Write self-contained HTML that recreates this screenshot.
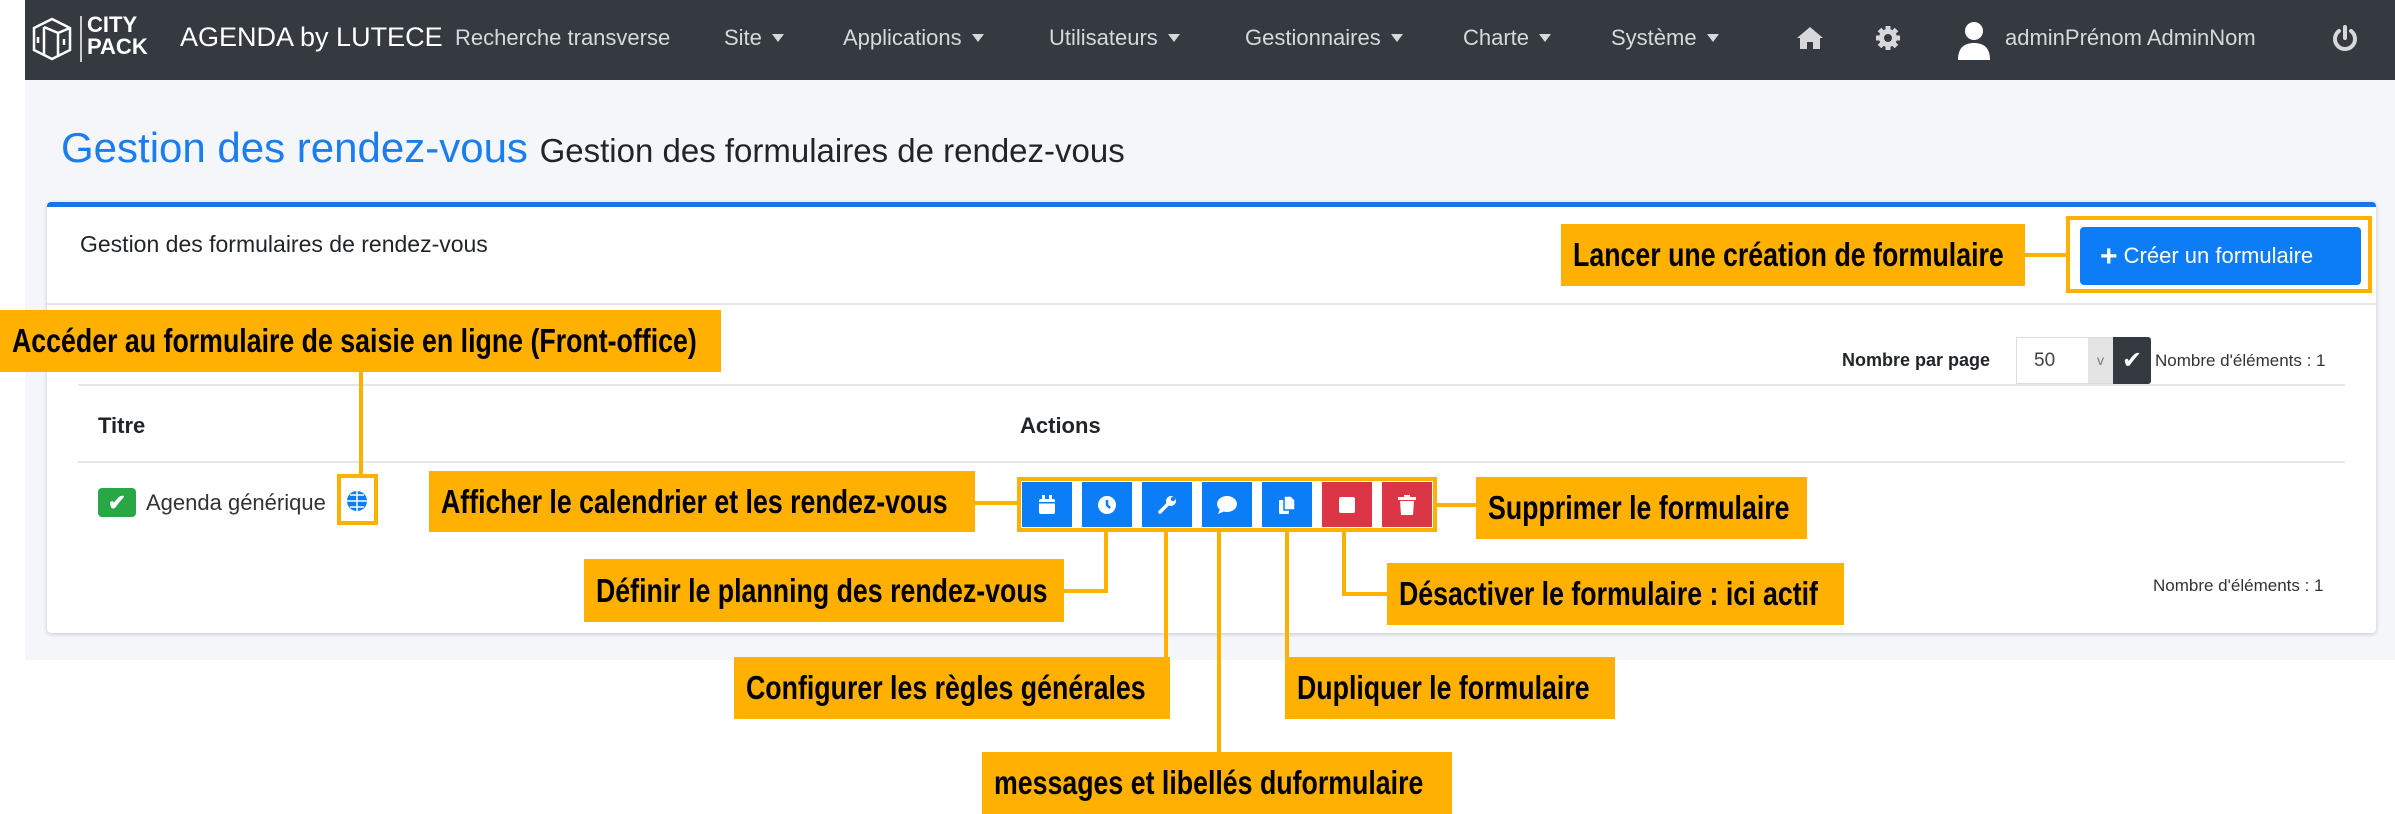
<!DOCTYPE html>
<html><head><meta charset="utf-8"><style>
*{margin:0;padding:0;box-sizing:border-box}
body{width:2395px;height:814px;background:#fff;position:relative;overflow:hidden;font-family:"Liberation Sans",sans-serif}
.a{position:absolute}
.nav{left:25px;top:0;width:2370px;height:80px;background:#343a40}
.nt{position:absolute;top:25px;font-size:22px;color:#d6d8da;white-space:nowrap}
.car{display:inline-block;width:0;height:0;border-left:6px solid transparent;border-right:6px solid transparent;border-top:8px solid #d6d8da;margin-left:10px;vertical-align:3px}
.lab{position:absolute;background:#ffb000;overflow:hidden;white-space:nowrap}
.lab span{position:absolute;left:12px;top:50%;transform:translateY(-50%) scaleX(.81);transform-origin:left center;font-weight:bold;font-size:33px;color:#000;}
.ob{position:absolute;border:4px solid #ffb000}
.ln{position:absolute;background:#ffb000}
.btn{position:absolute;top:482px;width:50px;height:45px;background:#0a7df7;display:flex;align-items:center;justify-content:center}
.red{background:#dc3545}
</style></head><body>
<div class="a nav"></div>
<svg class="a" style="left:28px;top:15px" width="48" height="48" viewBox="0 0 48 48" fill="none" stroke="#fff" stroke-width="2.5"><path d="M24 4 L42 13 L42 35 L24 44 L6 35 L6 13 Z"/><path d="M16 12 L30 18 L30 42 M16 12 L16 40 M30 18 L42 13"/><path d="M10 22 v6 M36 24 v6" /></svg>
<div class="a" style="left:80px;top:16px;width:2px;height:46px;background:#ccc"></div>
<div class="a" style="left:87px;top:14px;color:#fff;font-weight:bold;font-size:22px;line-height:22px">CITY<br>PACK</div>
<div class="a" style="left:180px;top:22px;color:#fff;font-size:27px">AGENDA by LUTECE</div>
<div class="nt" style="left:455px">Recherche transverse</div>
<div class="nt" style="left:724px">Site<i class="car"></i></div>
<div class="nt" style="left:843px">Applications<i class="car"></i></div>
<div class="nt" style="left:1049px">Utilisateurs<i class="car"></i></div>
<div class="nt" style="left:1245px">Gestionnaires<i class="car"></i></div>
<div class="nt" style="left:1463px">Charte<i class="car"></i></div>
<div class="nt" style="left:1611px">Système<i class="car"></i></div>
<svg class="a" style="left:1796px;top:26px" width="28" height="24" viewBox="0 0 28 24" fill="#d6d8da"><path d="M14 1 L27 12 L24 12 L24 23 L17 23 L17 16 L11 16 L11 23 L4 23 L4 12 L1 12 Z"/></svg>
<svg class="a" style="left:1875px;top:25px" width="26" height="26" viewBox="0 0 26 26"><circle cx="13" cy="13" r="9" fill="#d6d8da"/><g stroke="#d6d8da" stroke-width="5"><path d="M13 1v24M1 13h24M4.5 4.5l17 17M21.5 4.5l-17 17"/></g><circle cx="13" cy="13" r="4" fill="#343a40"/></svg>
<svg class="a" style="left:1957px;top:20px" width="34" height="40" viewBox="0 0 34 40" fill="#fff"><circle cx="17" cy="11" r="9"/><path d="M1 40 C1 27 8 23 17 23 C26 23 33 27 33 40 Z"/></svg>
<div class="nt" style="left:2005px;color:#d6d8da">adminPrénom AdminNom</div>
<svg class="a" style="left:2332px;top:24px" width="26" height="28" viewBox="0 0 26 28" fill="none" stroke="#d6d8da" stroke-width="4" stroke-linecap="round"><path d="M13 3 v11"/><path d="M7 7 A10 10 0 1 0 19 7"/></svg>
<div class="a" style="left:25px;top:80px;width:2370px;height:580px;background:#f4f6f9"></div>
<div class="a" style="left:61px;top:124px;font-size:42px;color:#1a7ef0;white-space:nowrap">Gestion des rendez-vous <span style="font-size:33px;color:#212529">Gestion des formulaires de rendez-vous</span></div>
<div class="a" style="left:47px;top:202px;width:2329px;height:431px;background:#fff;border-top:5px solid #1a73e8;border-radius:4px;box-shadow:0 1px 4px rgba(0,0,0,.2)"></div>
<div class="a" style="left:80px;top:231px;font-size:23px;color:#212529">Gestion des formulaires de rendez-vous</div>
<div class="a" style="left:47px;top:303px;width:2329px;height:2px;background:#e6e6e6"></div>
<div class="a" style="left:2080px;top:227px;width:281px;height:58px;background:#0d7df7;border-radius:4px;color:#fff;font-size:22px;line-height:58px;padding-left:20px"><b style="font-size:30px;vertical-align:-3px">+</b> Créer un formulaire</div>
<div class="ob" style="left:2066px;top:216px;width:306px;height:77px"></div>
<div class="ln" style="left:2025px;top:253px;width:41px;height:4px"></div>
<div class="lab" style="left:1561px;top:224px;width:464px;height:62px"><span>Lancer une création de formulaire</span></div>
<div class="a" style="left:1842px;top:350px;font-size:18px;font-weight:bold;color:#212529">Nombre par page</div>
<div class="a" style="left:2016px;top:337px;width:97px;height:47px;border:1px solid #ddd;background:#fff"></div>
<div class="a" style="left:2034px;top:350px;font-size:19px;color:#444">50</div>
<div class="a" style="left:2088px;top:338px;width:25px;height:45px;background:#e4e4e4;color:#777;font-size:14px;text-align:center;line-height:45px">v</div>
<div class="a" style="left:2113px;top:337px;width:38px;height:47px;background:#343a40;border-radius:0 3px 3px 0;color:#fff;font-size:24px;text-align:center;line-height:47px">✔</div>
<div class="a" style="left:2155px;top:351px;font-size:17px;color:#333">Nombre d'éléments : 1</div>
<div class="a" style="left:78px;top:384px;width:2267px;height:2px;background:#e6e6e6"></div>
<div class="a" style="left:98px;top:413px;font-size:22px;font-weight:bold;color:#212529">Titre</div>
<div class="a" style="left:1020px;top:413px;font-size:22px;font-weight:bold;color:#212529">Actions</div>
<div class="a" style="left:78px;top:461px;width:2267px;height:2px;background:#e6e6e6"></div>
<div class="a" style="left:98px;top:488px;width:38px;height:29px;background:#28a745;border-radius:4px;color:#fff;font-size:22px;text-align:center;line-height:29px;font-weight:bold">✔</div>
<div class="a" style="left:146px;top:490px;font-size:22px;color:#333">Agenda générique</div>
<svg class="a" style="left:345px;top:489px" width="24" height="24" viewBox="0 0 24 24" fill="none" stroke="#0d7df7" stroke-width="3"><circle cx="12" cy="12" r="10" fill="#0d7df7" stroke="none"/><path d="M2 12h20M12 2v20M5 6h14M5 18h14" stroke="#fff" stroke-width="1.5"/></svg>
<div class="ob" style="left:337px;top:474px;width:41px;height:51px"></div>
<div class="a" style="left:2153px;top:576px;font-size:17px;color:#333">Nombre d'éléments : 1</div>
<div class="ob" style="left:1017px;top:477px;width:420px;height:55px"></div>
<div class="btn" style="left:1022px"><svg width="18" height="20" viewBox="0 0 18 20" fill="#fff"><rect x="1" y="4" width="16" height="15" rx="2"/><rect x="4" y="0" width="3" height="6"/><rect x="11" y="0" width="3" height="6"/><rect x="1" y="7" width="16" height="1.5" fill="#0a7df7"/></svg></div>
<div class="btn" style="left:1082px"><svg width="20" height="20" viewBox="0 0 20 20"><circle cx="10" cy="10" r="9" fill="#fff"/><path d="M10 5v5l3 3" stroke="#0a7df7" stroke-width="2.5" fill="none"/></svg></div>
<div class="btn" style="left:1142px"><svg width="20" height="20" viewBox="0 0 20 20"><path d="M3 17 L11 9" stroke="#fff" stroke-width="3.5" stroke-linecap="round"/><circle cx="14" cy="6" r="5" fill="#fff"/><circle cx="16" cy="4" r="2.2" fill="#0a7df7"/></svg></div>
<div class="btn" style="left:1202px"><svg width="22" height="20" viewBox="0 0 22 20" fill="#fff"><ellipse cx="11" cy="9" rx="10" ry="8"/><path d="M4 14 L2 19 L9 16 Z"/></svg></div>
<div class="btn" style="left:1262px"><svg width="18" height="20" viewBox="0 0 18 20" fill="#fff"><rect x="1" y="5" width="10" height="14" rx="1"/><path d="M6 1 H13 L17 5 V15 H6 Z" stroke="#0a7df7" stroke-width="1.5"/></svg></div>
<div class="btn red" style="left:1322px"><svg width="18" height="18"><rect x="1" y="1" width="16" height="16" rx="2" fill="#fff"/></svg></div>
<div class="btn red" style="left:1382px"><svg width="18" height="20" viewBox="0 0 18 20" fill="#fff"><rect x="0" y="2" width="18" height="3"/><rect x="6" y="0" width="6" height="3"/><path d="M2 6 H16 L15 20 H3 Z"/></svg></div>
<div class="lab" style="left:0;top:310px;width:721px;height:62px"><span>Accéder au formulaire de saisie en ligne (Front-office)</span></div>
<div class="ln" style="left:359px;top:372px;width:4px;height:102px"></div>
<div class="lab" style="left:429px;top:471px;width:546px;height:61px"><span>Afficher le calendrier et les rendez-vous</span></div>
<div class="ln" style="left:975px;top:501px;width:42px;height:4px"></div>
<div class="lab" style="left:1476px;top:477px;width:331px;height:62px"><span>Supprimer le formulaire</span></div>
<div class="ln" style="left:1437px;top:503px;width:39px;height:4px"></div>
<div class="ln" style="left:1342px;top:532px;width:4px;height:64px"></div>
<div class="ln" style="left:1342px;top:592px;width:45px;height:4px"></div>
<div class="lab" style="left:1387px;top:563px;width:457px;height:62px"><span>Désactiver le formulaire : ici actif</span></div>
<div class="ln" style="left:1104px;top:532px;width:4px;height:61px"></div>
<div class="ln" style="left:1064px;top:589px;width:44px;height:4px"></div>
<div class="lab" style="left:584px;top:559px;width:480px;height:63px"><span>Définir le planning des rendez-vous</span></div>
<div class="ln" style="left:1164px;top:532px;width:4px;height:125px"></div>
<div class="lab" style="left:734px;top:657px;width:436px;height:62px"><span>Configurer les règles générales</span></div>
<div class="ln" style="left:1217px;top:532px;width:4px;height:220px"></div>
<div class="lab" style="left:982px;top:752px;width:470px;height:62px"><span>messages et libellés duformulaire</span></div>
<div class="ln" style="left:1285px;top:532px;width:4px;height:125px"></div>
<div class="lab" style="left:1285px;top:657px;width:330px;height:62px"><span>Dupliquer le formulaire</span></div>
</body></html>
